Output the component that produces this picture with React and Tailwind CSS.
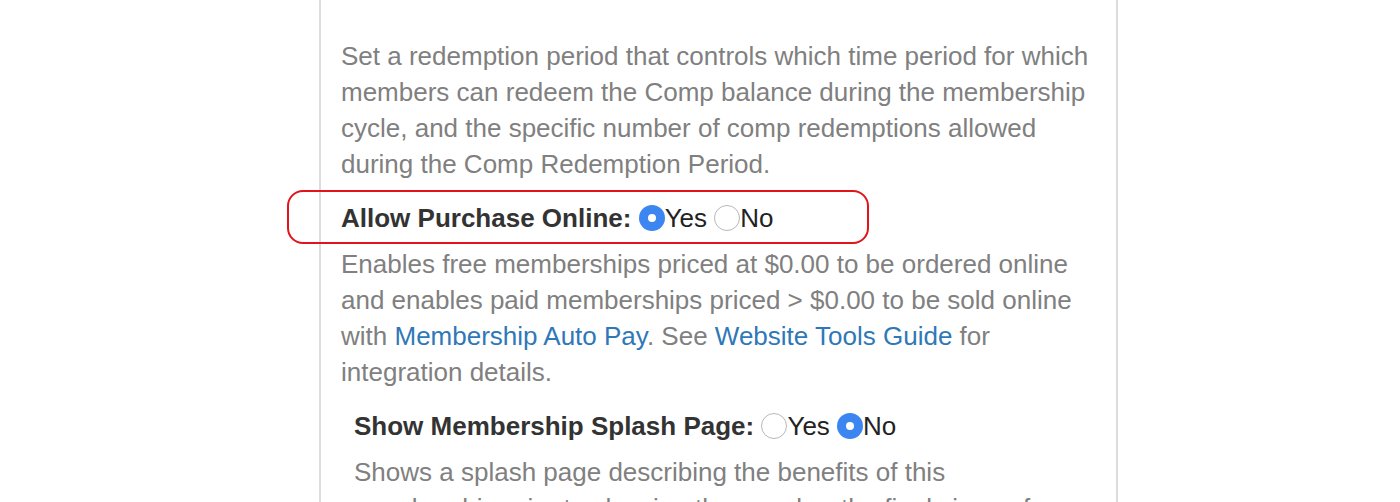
const Radio = ({ checked }) =>
  checked ? (
    <span className="flex w-[26px] h-[26px] rounded-full bg-[#3b86f1] items-center justify-center">
      <span className="w-[8px] h-[8px] rounded-full bg-white" />
    </span>
  ) : (
    <span className="block w-[26px] h-[26px] rounded-full bg-white border border-[#b8b8b8]" />
  )

const Choice = ({ label, yes }) => (
  <div className="flex items-center whitespace-pre">
    <span className="font-bold text-[#333]">{label} </span>
    <Radio checked={yes} />
    <span className="text-[#222]">Yes </span>
    <Radio checked={!yes} />
    <span className="text-[#222]">No</span>
  </div>
)

export default function App() {
  return (
    <div className="w-[1400px] h-[502px] overflow-hidden bg-white font-['Liberation_Sans',Arial,sans-serif] text-[26px] leading-[36px]">
      <div className="ml-[319px] w-[799px] h-full border-x-2 border-[#dcdcdc] pl-[20px] pr-[19px] pt-[38px]">
        <p className="text-[#808080]">
          Set a redemption period that controls which time period for which members can redeem the Comp balance during
          the membership cycle, and the specific number of comp redemptions allowed during the Comp Redemption Period.
        </p>

        <div className="relative mt-[18px]">
          <div className="absolute left-[-54px] top-[-10px] w-[582px] h-[54px] rounded-[16px] border-2 border-[#e3131b]" />
          <Choice label="Allow Purchase Online:" yes />
        </div>

        <p className="mt-[10px] text-[#808080]">
          Enables free memberships priced at $0.00 to be ordered online and enables paid memberships priced &gt; $0.00 to
          be sold online with <a className="text-[#2f78b7]">Membership Auto Pay</a>. See{' '}
          <a className="text-[#2f78b7]">Website Tools Guide</a> for integration details.
        </p>

        <div className="px-[13px] mt-[18px]">
          <Choice label="Show Membership Splash Page:" yes={false} />
          <p className="mt-[10px] text-[#808080]">
            Shows a splash page describing the benefits of this membership prior to showing the member the final signup
            form.
          </p>
        </div>
      </div>
    </div>
  )
}
